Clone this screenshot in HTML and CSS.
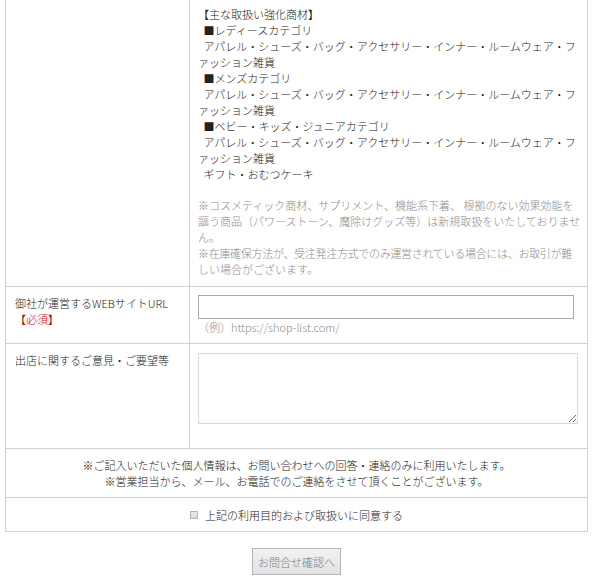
FILE: index.html
```html
<!DOCTYPE html>
<html lang="ja">
<head>
<meta charset="utf-8">
<title>出店お問合せ</title>
<link rel="stylesheet" href="styles.css">
</head>
<body>
<div class="page">
  <table class="form-table">
    <colgroup><col class="col-label"><col class="col-field"></colgroup>
    <tr class="row-first">
      <td class="label"></td>
      <td class="field">
        <div class="items">【主な取扱い強化商材】<br>&ensp;■レディースカテゴリ<br>&ensp;アパレル・シューズ・バッグ・アクセサリー・インナー・ルームウェア・フ<br>ァッション雑貨<br>&ensp;■メンズカテゴリ<br>&ensp;アパレル・シューズ・バッグ・アクセサリー・インナー・ルームウェア・フ<br>ァッション雑貨<br>&ensp;■ベビー・キッズ・ジュニアカテゴリ<br>&ensp;アパレル・シューズ・バッグ・アクセサリー・インナー・ルームウェア・フ<br>ァッション雑貨<br>&ensp;ギフト・おむつケーキ</div>
        <div class="caution">※コスメティック商材、サプリメント、機能系下着、 根拠のない効果効能を<br>謳う商品（パワーストーン、魔除けグッズ等）は新規取扱をいたしておりませ<br>ん。<br><span class="tight">※在庫確保方法が、受注発注方式でのみ運営されている場合には、お取引が難</span><br>しい場合がございます。</div>
      </td>
    </tr>
    <tr>
      <td class="label">御社が運営するWEBサイトURL<br><span class="required">【必須】</span></td>
      <td class="field">
        <input class="text-input" type="text">
        <div class="example">（例）https://shop-list.com/</div>
      </td>
    </tr>
    <tr>
      <td class="label">出店に関するご意見・ご要望等</td>
      <td class="field"><textarea class="textarea"></textarea></td>
    </tr>
    <tr>
      <td class="center" colspan="2">※ご記入いただいた個人情報は、お問い合わせへの回答・連絡のみに利用いたします。<br>※営業担当から、メール、お電話でのご連絡をさせて頂くことがございます。</td>
    </tr>
    <tr>
      <td class="center" colspan="2"><span class="agree"><span class="checkbox"></span>上記の利用目的および取扱いに同意する</span></td>
    </tr>
  </table>
  <div class="actions"><button class="submit" type="button">お問合せ確認へ</button></div>
</div>
</body>
</html>
```
FILE: styles.css
```css
html, body {
  margin: 0;
  background: #fff;
}
body {
  font-family: "Noto Sans CJK JP", "Noto Sans", sans-serif;
  font-size: 11px;
  font-weight: 300;
  color: #222;
}
.page {
  padding: 0 5px;
  width: 583px;
}
.form-table {
  width: 583px;
  border-collapse: collapse;
  table-layout: fixed;
}
.col-label { width: 184px; }
.form-table td {
  border: 1px solid #d0d0d0;
  padding: 8px 9px;
  line-height: 16px;
  vertical-align: top;
}
.form-table td.field {
  padding-left: 8px;
  white-space: nowrap;
}
.row-first td {
  border-top: none;
  padding-top: 6px;
  padding-bottom: 9px;
}
.caution {
  margin-top: 15px;
  color: #8c8c8c;
}
.tight { letter-spacing: -0.3px; }
.required { color: #cc0000; }
.text-input {
  display: block;
  box-sizing: border-box;
  width: 376px;
  height: 24px;
  margin: 0;
  padding: 2px 4px;
  border: 1px solid #a9a9a9;
  font: inherit;
}
.example { color: #8c8c8c; }
.textarea {
  display: block;
  box-sizing: border-box;
  width: 380px;
  height: 71px;
  margin: 1px 0 16px;
  border: 1px solid #d8d8d8;
  font: inherit;
}
.form-table td.center { text-align: center; }
.agree {
  display: inline-flex;
  align-items: center;
}
.checkbox {
  display: inline-block;
  box-sizing: border-box;
  width: 8px;
  height: 8px;
  margin-right: 7px;
  border: 1px solid #b4b4b4;
  background: linear-gradient(#ececec, #d8d8d8);
}
.actions {
  display: flex;
  justify-content: center;
  padding-top: 16px;
}
.submit {
  height: 27px;
  padding: 0 5px;
  border: 1px solid #b5b5b5;
  background: linear-gradient(#f2f2f2, #e2e2e2);
  color: #808080;
  font-family: inherit;
  font-weight: 300;
  font-size: 11px;
}
```
